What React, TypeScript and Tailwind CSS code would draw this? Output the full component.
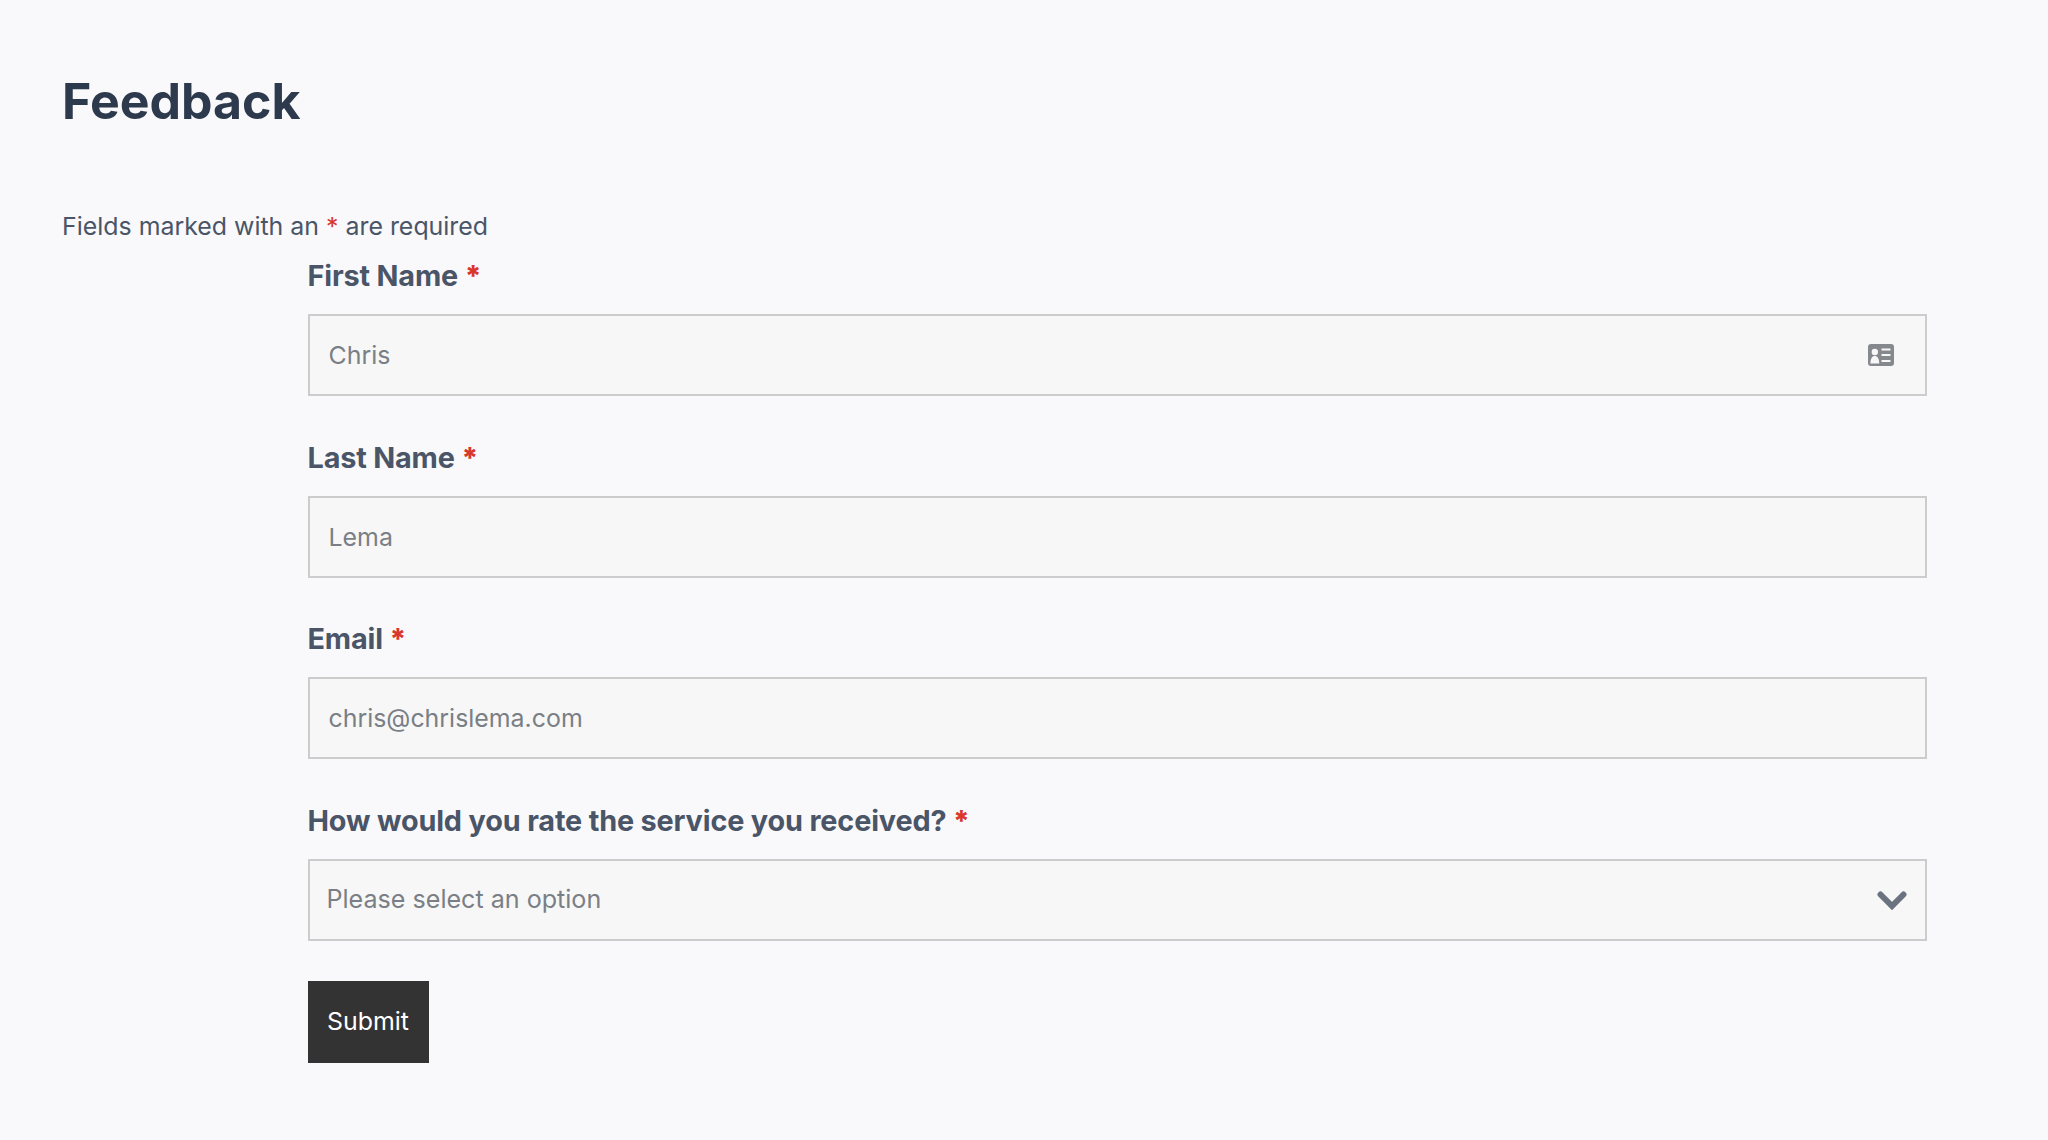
const fields = [
  { id: 'first', label: 'First Name', placeholder: 'Chris', type: 'text' },
  { id: 'last', label: 'Last Name', placeholder: 'Lema', type: 'text' },
  { id: 'email', label: 'Email', placeholder: 'chris@chrislema.com', type: 'email' },
];

function FieldLabel({ htmlFor, children }: { htmlFor: string; children: string }) {
  return (
    <label htmlFor={htmlFor} className="block h-[55px] text-[28.8px] leading-[34px] font-[650] tracking-[-0.15px] text-[#4a5568]">
      {children} <span className="font-extrabold text-[#d9372c]">*</span>
    </label>
  );
}

// contact card icon shown inside the first name input
function CardIcon() {
  return (
    <svg viewBox="0 0 26 22" className="absolute top-[30px] right-[33px] h-[22px] w-[26px]">
      <rect width="26" height="22" rx="3" fill="#85888d" />
      <circle cx="6.800" cy="8" r="3.200" fill="#f7f7f7" />
      <path d="M2.400 19.500c0-5 1.800-7.500 4.400-7.500s4.400 2.500 4.400 7.500z" fill="#f7f7f7" />
      <path d="M13.500 5.500h9M13.500 11h9M13.500 17h9" stroke="#f7f7f7" strokeWidth="2" />
    </svg>
  );
}

export default function App() {
  return (
    <div className="min-h-[1140px] bg-[#f9f9fb] pl-[62px] pr-[121px] pt-[69px] font-['Inter',sans-serif]">
      <h1 className="text-[50px] leading-[64px] font-bold text-[#2d3a4d]">Feedback</h1>
      <p className="mt-[75px] h-[36px] text-[24.9px] leading-[36px] text-[#4a5568]">
        Fields marked with an <span className="text-[#d9372c]">*</span> are required
      </p>
      <form className="mt-[15px] ml-[245.5px]">
        {fields.map((field) => (
          <div key={field.id} className="mb-[44.5px]">
            <FieldLabel htmlFor={field.id}>{field.label}</FieldLabel>
            <div className="relative">
              <input
                id={field.id}
                type={field.type}
                placeholder={field.placeholder}
                className="block h-[82px] w-full border-2 border-[#cccccc] bg-[#f7f7f7] px-[19px] text-[24.9px] text-[#4a5568] placeholder:text-[#7a7f86]"
              />
              {field.id === 'first' && <CardIcon />}
            </div>
          </div>
        ))}
        <div className="mb-[40px]">
          <FieldLabel htmlFor="rating">How would you rate the service you received?</FieldLabel>
          <div className="relative">
            <select
              id="rating"
              className="block h-[82px] w-full appearance-none border-2 border-[#cccccc] bg-[#f7f7f7] px-[17px] text-[25.1px] text-[#7a7f86]"
            >
              <option>Please select an option</option>
            </select>
            <svg viewBox="0 0 30 20" className="absolute top-[32px] right-[20px] h-[20px] w-[30px]" fill="none">
              <path d="M3.500 3.500 15 15 26.500 3.500" stroke="#6b7280" strokeWidth="6" strokeLinecap="round" strokeLinejoin="miter" />
            </svg>
          </div>
        </div>
        <button type="submit" className="h-[82px] w-[121px] bg-[#333333] text-[24.9px] text-white">
          Submit
        </button>
      </form>
    </div>
  );
}
